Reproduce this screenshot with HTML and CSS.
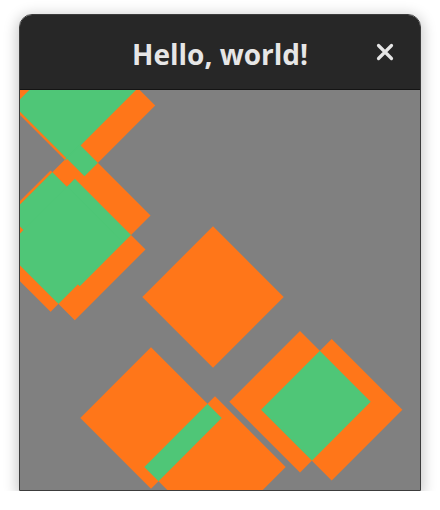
FILE: index.html
```html
<!DOCTYPE html>
<html lang="en">
<head>
<meta charset="utf-8">
<title>Hello, world!</title>
<link rel="stylesheet" href="styles.css">
</head>
<body>
<div class="window">
  <header class="headerbar">
    <span class="spacer"></span>
    <h1 class="title">Hello, world!</h1>
    <button class="close" aria-label="Close">
      <svg width="18" height="18" viewBox="0 0 18 18"><path d="M2.5 2.5 L15.5 15.5 M15.5 2.5 L2.5 15.5" stroke="#e6e6e6" stroke-width="3.2" stroke-linecap="round"/></svg>
    </button>
  </header>
  <div class="canvas">
    <svg width="400" height="400" viewBox="0 0 400 400">
      <defs>
        <clipPath id="cE"><polygon points="64.5,-55.2 135.2,15.5 64.5,86.2 -6.2,15.5"/></clipPath>
        <clipPath id="cF"><polygon points="45.5,-70.9 116.2,-0.2 45.5,70.5 -25.2,-0.2"/></clipPath>
        <clipPath id="cH1"><polygon points="59.8,54.8 130.5,125.5 59.8,196.2 -10.9,125.5"/></clipPath>
        <clipPath id="cH2"><polygon points="54.8,88.8 125.5,159.5 54.8,230.2 -15.9,159.5"/></clipPath>
        <clipPath id="cA"><polygon points="280,241 350.7,311.7 280,382.4 209.3,311.7"/></clipPath>
        <clipPath id="cC"><polygon points="131,257.3 201.7,328 131,398.7 60.3,328"/></clipPath>
      </defs>
      <g class="orange">
        <polygon points="64.5,-55.2 135.2,15.5 64.5,86.2 -6.2,15.5"/>
        <polygon points="45.5,-70.9 116.2,-0.2 45.5,70.5 -25.2,-0.2"/>
        <polygon points="59.8,54.8 130.5,125.5 59.8,196.2 -10.9,125.5"/>
        <polygon points="54.8,88.8 125.5,159.5 54.8,230.2 -15.9,159.5"/>
        <polygon points="30.6,80.4 101.3,151.1 30.6,221.8 -40.1,151.1"/>
        <polygon points="193,136.3 263.7,207 193,277.7 122.3,207"/>
        <polygon points="280,241 350.7,311.7 280,382.4 209.3,311.7"/>
        <polygon points="311.7,249 382.4,319.7 311.7,390.4 241,319.7"/>
        <polygon points="131,257.3 201.7,328 131,398.7 60.3,328"/>
        <polygon points="195,306.3 265.7,377 195,447.7 124.3,377"/>
      </g>
      <g class="green">
        <polygon clip-path="url(#cE)" points="45.5,-70.9 116.2,-0.2 45.5,70.5 -25.2,-0.2"/>
        <polygon clip-path="url(#cE)" points="59.8,54.8 130.5,125.5 59.8,196.2 -10.9,125.5"/>
        <polygon clip-path="url(#cF)" points="59.8,54.8 130.5,125.5 59.8,196.2 -10.9,125.5"/>
        <polygon clip-path="url(#cH1)" points="54.8,88.8 125.5,159.5 54.8,230.2 -15.9,159.5"/>
        <polygon clip-path="url(#cH1)" points="30.6,80.4 101.3,151.1 30.6,221.8 -40.1,151.1"/>
        <polygon clip-path="url(#cH2)" points="30.6,80.4 101.3,151.1 30.6,221.8 -40.1,151.1"/>
        <polygon clip-path="url(#cA)" points="311.7,249 382.4,319.7 311.7,390.4 241,319.7"/>
        <polygon clip-path="url(#cC)" points="195,306.3 265.7,377 195,447.7 124.3,377"/>
      </g>
    </svg>
  </div>
</div>
</body>
</html>
```
FILE: styles.css
```css
html, body {
  margin: 0;
}

body {
  background: #ffffff;
  padding: 14px 0 0 19px;
  font-family: "Open Sans", "Noto Sans", "DejaVu Sans", sans-serif;
}

.window {
  width: 400px;
  border: 1px solid #3c3c3c;
  border-radius: 13px 13px 0 0;
  overflow: hidden;
  box-shadow: 0 3px 14px 2px rgba(0, 0, 0, 0.22);
}

.headerbar {
  height: 74px;
  background: #272727;
  border-bottom: 1px solid #141414;
  display: grid;
  grid-template-columns: 1fr auto 1fr;
  align-items: center;
}

.title {
  margin: 0;
  padding-top: 3px;
  font-size: 28px;
  font-weight: 700;
  color: #e6e6e6;
  letter-spacing: 0;
}

.close {
  justify-self: end;
  margin-right: 26px;
  padding: 0;
  border: 0;
  background: none;
  width: 18px;
  height: 18px;
  display: flex;
}

.canvas {
  height: 400px;
  background: #808080;
}

.canvas svg {
  display: block;
}

.orange polygon {
  fill: #ff7619;
}

.green polygon {
  fill: #4fc677;
}
```
